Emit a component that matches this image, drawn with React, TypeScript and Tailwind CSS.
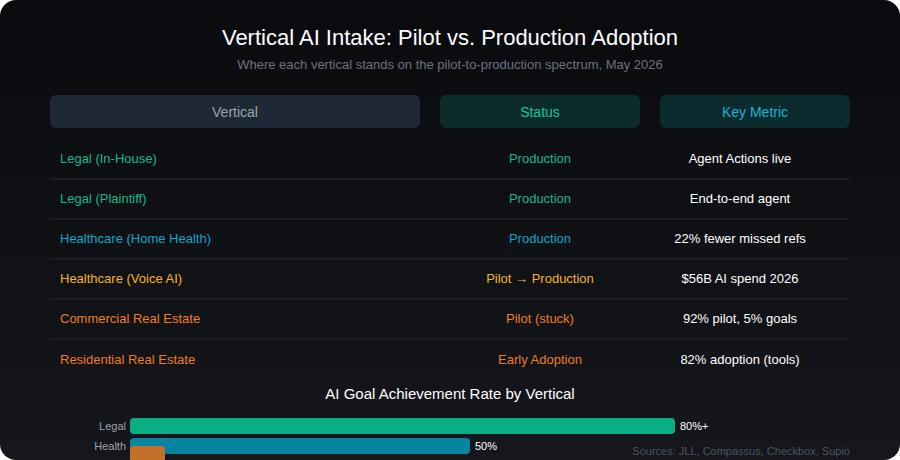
const rows = [
  { v: "Legal (In-House)", s: "Production", m: "Agent Actions live", c: "text-[#14b88c]" },
  { v: "Legal (Plaintiff)", s: "Production", m: "End-to-end agent", c: "text-[#14b88c]" },
  { v: "Healthcare (Home Health)", s: "Production", m: "22% fewer missed refs", c: "text-[#0ea5c9]" },
  { v: "Healthcare (Voice AI)", s: "Pilot → Production", m: "$56B AI spend 2026", c: "text-[#f5b324]" },
  { v: "Commercial Real Estate", s: "Pilot (stuck)", m: "92% pilot, 5% goals", c: "text-[#f07c22]" },
  { v: "Residential Real Estate", s: "Early Adoption", m: "82% adoption (tools)", c: "text-[#f07c22]" },
];

export default function App() {
  return (
    <div className="h-[460px] w-[900px] bg-white font-['Liberation_Sans',Arial,sans-serif]">
      <div className="relative h-full w-full overflow-hidden rounded-2xl bg-gradient-to-b from-[#0a0b0e] to-[#15171c] px-[50px] pt-[24px]">
        <h1 className="text-center text-[22px] leading-[28px] text-white">
          Vertical AI Intake: Pilot vs. Production Adoption
        </h1>
        <p className="mt-[4px] text-center text-[13px] leading-[18px] text-[#6b7280]">
          Where each vertical stands on the pilot-to-production spectrum, May 2026
        </p>

        <div className="mt-[21px] grid grid-cols-[370px_200px_190px] gap-[20px] text-[14px]">
          <div className="flex h-[33px] items-center justify-center rounded-md bg-[#1e2836] pt-px text-[#9ca3af]">Vertical</div>
          <div className="flex h-[33px] items-center justify-center rounded-md bg-[#0b2b2b] pt-px text-[#14c999]">Status</div>
          <div className="flex h-[33px] items-center justify-center rounded-md bg-[#0b2b2e] pt-px text-[#14b6d4]">Key Metric</div>
        </div>

        <div className="mt-[12px] text-[13px]">
          {rows.map((r, i) => (
            <div
              key={r.v}
              className={`grid h-[40px] grid-cols-[390px_200px_210px] items-center ${
                i < rows.length - 1 ? "border-b-2 border-[#1b1e25]" : ""
              }`}
            >
              <div className={`pl-[10px] ${r.c}`}>{r.v}</div>
              <div className={`text-center ${r.c}`}>{r.s}</div>
              <div className="pr-[10px] text-center text-white">{r.m}</div>
            </div>
          ))}
        </div>

        <h2 className="mt-[4px] text-center text-[15px] leading-[20px] text-white">
          AI Goal Achievement Rate by Vertical
        </h2>

        <div className="mt-[14px] flex flex-col gap-[4px] text-[11px]">
          <div className="flex h-[16px] items-center">
            <span className="w-[80px] pr-[4px] text-right text-[#9ca3af]">Legal</span>
            <div className="h-full w-[545px] rounded bg-[#0aae84]" />
            <span className="ml-[5px] text-white">80%+</span>
          </div>
          <div className="flex h-[16px] items-center">
            <span className="w-[80px] pr-[4px] text-right text-[#9ca3af]">Health</span>
            <div className="h-full w-[340px] rounded bg-[#0784a0]" />
            <span className="ml-[5px] text-white">50%</span>
          </div>
          <div className="-mt-[12px] ml-[80px] flex h-[16px] items-center">
            <div className="h-full w-[35px] rounded bg-[#c2702a]" />
          </div>
        </div>

        <div className="absolute bottom-[1px] right-[50px] text-[11px] text-[#4b5563]">
          Sources: JLL, Compassus, Checkbox, Supio
        </div>
      </div>
    </div>
  );
}
